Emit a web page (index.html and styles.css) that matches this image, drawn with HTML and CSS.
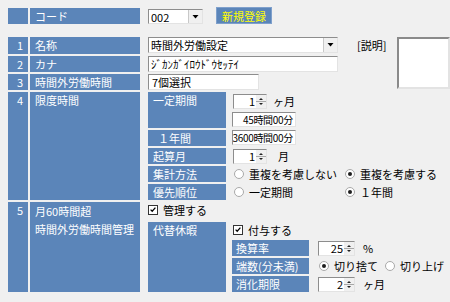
FILE: index.html
```html
<!DOCTYPE html>
<html lang="ja">
<head>
    <meta charset="UTF-8">
    <title>時間外労働設定</title>
    <link rel="stylesheet" href="styles.css">
</head>
<body>
    <div class="page">
        <!-- Code -->
        <div class="row code-row">
            <div class="num"></div>
            <div class="label">コード</div>
            <div class="field inline">
                <div class="combo code-combo">
                    <span class="combo-text">002</span>
                    <span class="drop"><svg viewBox="0 0 13 13"><path d="M3.5 5h6l-3 3.5z"/></svg></span>
                </div>
                <div class="btn-new">新規登録</div>
            </div>
        </div>

        <!-- Name / Kana / Hours + description -->
        <div class="head-block">
            <div class="head-rows">
                <div class="row r1">
                    <div class="num">1</div>
                    <div class="label">名称</div>
                    <div class="field">
                        <div class="combo wide">
                            <span class="combo-text">時間外労働設定</span>
                            <span class="drop"><svg viewBox="0 0 13 13"><path d="M3.5 5h6l-3 3.5z"/></svg></span>
                        </div>
                    </div>
                </div>
                <div class="row">
                    <div class="num">2</div>
                    <div class="label">カナ</div>
                    <div class="field"><div class="input wide">ｼﾞｶﾝｶﾞｲﾛｳﾄﾞｳｾｯﾃｲ</div></div>
                </div>
                <div class="row">
                    <div class="num">3</div>
                    <div class="label">時間外労働時間</div>
                    <div class="field"><div class="input mid">7個選択</div></div>
                </div>
            </div>
            <div class="desc-label">[説明]</div>
            <div class="desc-box"></div>
        </div>

        <!-- Limits -->
        <div class="row tall">
            <div class="num">4</div>
            <div class="label">限度時間</div>
            <div class="field limit-grid">
                <div class="sub-label">一定期間</div>
                <div class="ctrl stack">
                    <div class="line">
                        <div class="spin"><span class="spin-val">1</span><span class="spin-btn"><svg viewBox="0 0 10 13"><path class="sep" d="M0 6.5h10"/><path d="M3 5h4L5 3z M3 8h4l-2 2z"/></svg></span></div>
                        <span class="unit">ヶ月</span>
                    </div>
                    <div class="input time"><span>45時間00分</span></div>
                </div>

                <div class="sub-label indent">１年間</div>
                <div class="ctrl"><div class="input time"><span>3600時間00分</span></div></div>

                <div class="sub-label">起算月</div>
                <div class="ctrl line">
                    <div class="spin"><span class="spin-val">1</span><span class="spin-btn"><svg viewBox="0 0 10 13"><path class="sep" d="M0 6.5h10"/><path d="M3 5h4L5 3z M3 8h4l-2 2z"/></svg></span></div>
                    <span class="unit month">月</span>
                </div>

                <div class="sub-label">集計方法</div>
                <div class="ctrl radios">
                    <span class="radio-opt wide-opt"><span class="radio"></span>重複を考慮しない</span>
                    <span class="radio-opt"><span class="radio on"></span>重複を考慮する</span>
                </div>

                <div class="sub-label">優先順位</div>
                <div class="ctrl radios">
                    <span class="radio-opt wide-opt"><span class="radio"></span>一定期間</span>
                    <span class="radio-opt"><span class="radio on"></span>１年間</span>
                </div>
            </div>
        </div>

        <!-- Over 60 hours -->
        <div class="row tall">
            <div class="num">5</div>
            <div class="label two">月60時間超<br>時間外労働時間管理</div>
            <div class="field">
                <div class="check-line">
                    <span class="check"><svg viewBox="0 0 10 10"><path d="M2 4.5l2 2 4-4.5"/></svg></span>管理する
                </div>
                <div class="alt-grid">
                    <div class="sub-label">代替休暇</div>
                    <div class="alt-ctrl">
                        <div class="check-line">
                            <span class="check"><svg viewBox="0 0 10 10"><path d="M2 4.5l2 2 4-4.5"/></svg></span>付与する
                        </div>
                        <div class="rate-grid">
                            <div class="sub-label">換算率</div>
                            <div class="ctrl line">
                                <div class="spin long"><span class="spin-val">25</span><span class="spin-btn"><svg viewBox="0 0 10 13"><path class="sep" d="M0 6.5h10"/><path d="M3 5h4L5 3z M3 8h4l-2 2z"/></svg></span></div>
                                <span class="unit pct">%</span>
                            </div>

                            <div class="sub-label">端数(分未満)</div>
                            <div class="ctrl radios">
                                <span class="radio-opt short-opt"><span class="radio on"></span>切り捨て</span>
                                <span class="radio-opt"><span class="radio"></span>切り上げ</span>
                            </div>

                            <div class="sub-label">消化期限</div>
                            <div class="ctrl line">
                                <div class="spin long"><span class="spin-val">2</span><span class="spin-btn"><svg viewBox="0 0 10 13"><path class="sep" d="M0 6.5h10"/><path d="M3 5h4L5 3z M3 8h4l-2 2z"/></svg></span></div>
                                <span class="unit pct">ヶ月</span>
                            </div>
                        </div>
                    </div>
                </div>
            </div>
        </div>
    </div>
</body>
</html>
```

FILE: styles.css
```css
:root {
    --bg: #f0f0f0;
    --cell: #5b85b9;
    --cell-text: #ffffff;
    --edge-dark: #8d8d8d;
    --edge-light: #e3e3e3;
}

* {
    margin: 0;
    padding: 0;
    box-sizing: border-box;
}

body {
    width: 450px;
    height: 302px;
    overflow: hidden;
    background: var(--bg);
    font-family: "Noto Sans CJK JP", "Noto Sans", sans-serif;
    font-size: 11px;
    color: #000;
}

.page {
    padding: 8px 0 0 8px;
    display: flex;
    flex-direction: column;
    gap: 2px;
}

/* Row structure */
.row {
    display: grid;
    grid-template-columns: 20px 110px 1fr;
    column-gap: 2px;
}

.num,
.label,
.sub-label {
    background: var(--cell);
    color: var(--cell-text);
    line-height: 16px;
    white-space: nowrap;
    overflow: hidden;
}

.num {
    text-align: right;
    padding-right: 5px;
}

.label {
    padding-left: 5px;
}

.label.two {
    line-height: 18px;
}

.field {
    margin-left: 6px;
}

.field.inline {
    display: flex;
    align-items: flex-start;
    gap: 13px;
}

.code-row {
    height: 16px;
    margin-bottom: 11px;
}

/* Top block */
.head-block {
    display: flex;
    align-items: flex-start;
}

.head-rows {
    width: 330px;
    display: grid;
    grid-template-rows: 17px 16px 16px;
    row-gap: 2px;
}

.desc-label {
    width: 45px;
    margin-left: 19px;
    line-height: 16px;
}

.desc-box {
    width: 60px;
    height: 52px;
    background: #fff;
    border: 2px solid;
    border-color: #8a8a8a #e3e3e3 #e3e3e3 #8a8a8a;
}

/* Inputs */
.input,
.combo,
.spin {
    background: #fff;
    border: 1px solid;
    border-color: var(--edge-dark) var(--edge-light) var(--edge-light) var(--edge-dark);
    height: 16px;
    line-height: 14px;
    white-space: nowrap;
    overflow: hidden;
}

.input {
    padding-left: 2px;
}

.input.wide {
    width: 190px;
}

.input.mid {
    width: 111px;
    padding-left: 3px;
}

.input.time {
    width: 64px;
    height: 15px;
    line-height: 13px;
    font-size: 10px;
    letter-spacing: -0.3px;
    display: flex;
    justify-content: flex-end;
    padding: 0 2px 0 0;
}

.combo {
    display: flex;
}

.combo.wide {
    width: 190px;
}

.code-combo {
    width: 55px;
    height: 15px;
    margin-top: 1px;
}

.combo-text {
    flex: 1;
    padding-left: 2px;
}

.drop {
    width: 14px;
    background: var(--bg);
    border-left: 1px solid #c8c8c8;
}

.drop svg {
    display: block;
    width: 13px;
    height: 13px;
    fill: #000;
}

.btn-new {
    margin-top: -1px;
    height: 17px;
    padding: 0 5px;
    line-height: 17px;
    background: var(--cell);
    color: #ffff00;
    border: 1px solid #7fa0cc;
}

/* Sub grids */
.limit-grid {
    display: grid;
    grid-template-columns: 78px 1fr;
    grid-template-rows: 36px 16px 16px 16px 16px;
    gap: 2px 6px;
}

.sub-label {
    padding-left: 5px;
}

.sub-label.indent {
    padding-left: 10px;
}

.ctrl {
    line-height: 16px;
}

.stack {
    display: flex;
    flex-direction: column;
    gap: 3px;
    padding-top: 1px;
}

.line {
    display: flex;
    align-items: center;
}

.spin {
    display: flex;
    width: 34px;
    height: 15px;
    line-height: 13px;
    margin-left: 1px;
}

.spin.long {
    width: 37px;
}

.spin-val {
    flex: 1;
    text-align: right;
    padding-right: 1px;
}

.spin-btn {
    width: 10px;
    background: var(--bg);
}

.spin-btn svg {
    display: block;
    width: 10px;
    height: 13px;
    fill: #222;
}

.spin-btn .sep {
    stroke: #a8a8a8;
    stroke-width: 1;
    fill: none;
}

.unit {
    margin-left: 6px;
}

.unit.month {
    margin-left: 11px;
}

.unit.pct {
    margin-left: 8px;
}

/* Radios */
.radios {
    display: flex;
    align-items: center;
}

.radio-opt {
    display: inline-flex;
    align-items: center;
    gap: 5px;
}

.wide-opt {
    width: 111px;
}

.short-opt {
    width: 66px;
}

.radio {
    width: 10px;
    height: 10px;
    margin-left: 2px;
    border-radius: 50%;
    border: 1px solid #a9a9a9;
    background: #fff;
    position: relative;
}

.radio.on::after {
    content: '';
    position: absolute;
    inset: 2px;
    border-radius: 50%;
    background: #1e1e1e;
}

/* Checkboxes */
.check-line {
    display: flex;
    align-items: center;
    gap: 5px;
    height: 16px;
    line-height: 16px;
}

.check {
    width: 10px;
    height: 10px;
    border: 1px solid #333;
    background: #fff;
}

.check svg {
    display: block;
    width: 8px;
    height: 8px;
    fill: none;
    stroke: #000;
    stroke-width: 1.6;
}

.field > .check-line {
    margin-bottom: 4px;
}

.alt-grid {
    display: grid;
    grid-template-columns: 78px 1fr;
    column-gap: 6px;
}

.alt-ctrl {
    display: flex;
    flex-direction: column;
    gap: 2px;
}

.alt-ctrl > .check-line {
    padding-left: 1px;
}

.rate-grid {
    display: grid;
    grid-template-columns: 77px 1fr;
    grid-template-rows: 16px 16px 16px;
    gap: 2px 8px;
}

.rate-grid .sub-label {
    padding-left: 4px;
}
```
